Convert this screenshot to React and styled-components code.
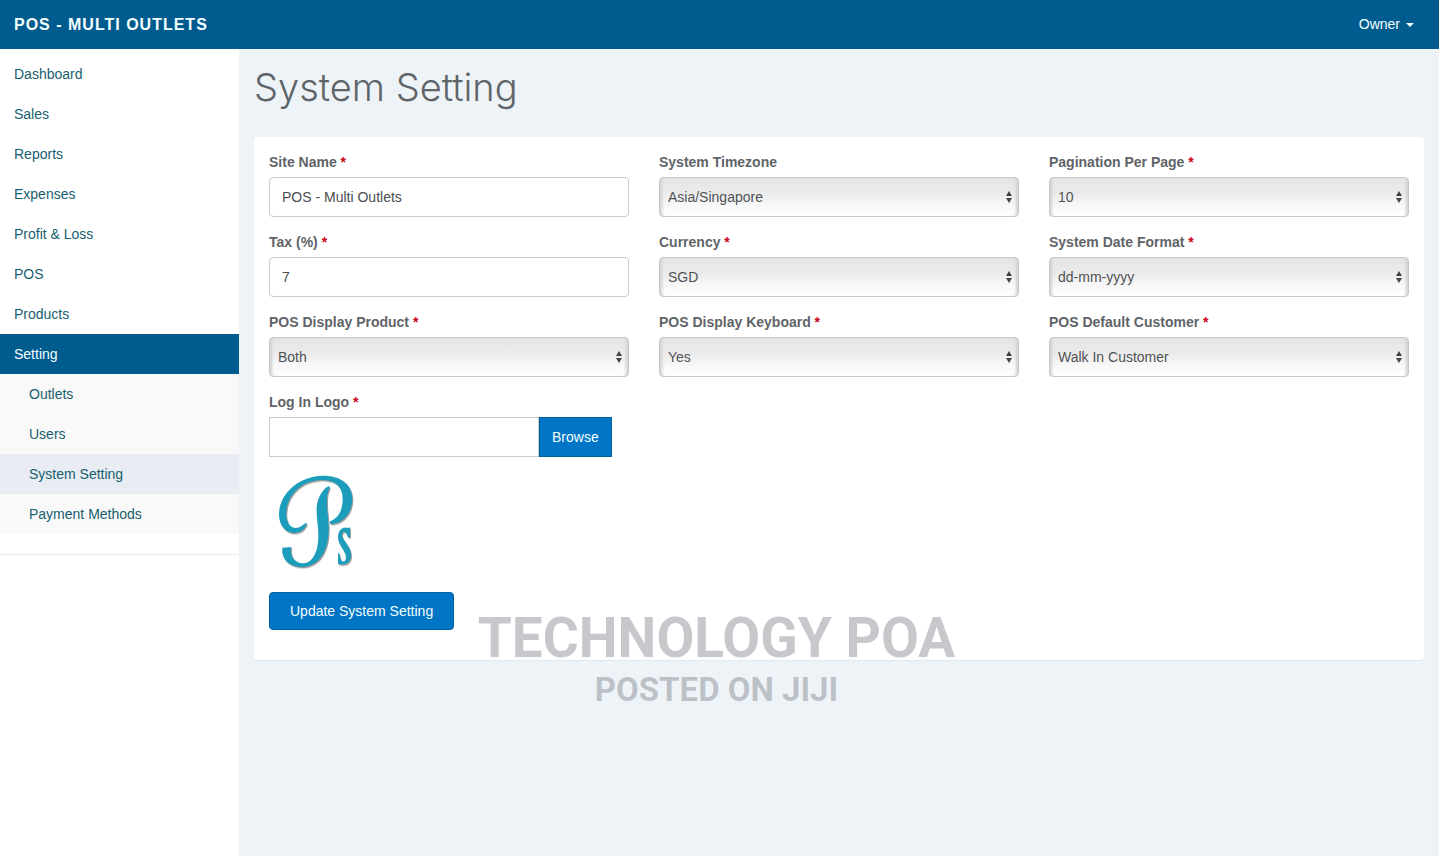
import React from 'react'
import styled, { createGlobalStyle } from 'styled-components'

const GlobalStyle = createGlobalStyle`
  * {
    box-sizing: border-box;
  }

  body {
    background-color: #EEF3F7;
    color: #5F6468;
    font-family: 'Liberation Sans', Arial, sans-serif;
    font-size: 14px;
    line-height: 20px;
    margin: 0;
  }

  input,
  select,
  button {
    font: inherit;
  }
`

const Page = styled.div`
  display: flex;
  flex-direction: column;
  min-height: 100vh;
`

const Navbar = styled.header`
  align-items: center;
  background-color: #005B8E;
  display: flex;
  height: 49px;
  justify-content: space-between;
  padding: 0 25px 0 14px;
`

const Brand = styled.a`
  color: #F4FFFF;
  font-size: 16px;
  font-weight: bold;
  letter-spacing: 1px;
  text-decoration: none;
  text-transform: uppercase;
`

const UserMenu = styled.button`
  align-items: center;
  background: none;
  border: none;
  color: #F4FFFF;
  display: flex;
  gap: 6px;
  padding: 0 0 2px;
`

const Caret = styled.span`
  border-left: 4px solid transparent;
  border-right: 4px solid transparent;
  border-top: 4px solid currentColor;
  margin-top: 2px;
`

const Body = styled.div`
  display: flex;
  flex: 1;
`

const Sidebar = styled.nav`
  background-color: #FFFFFF;
  flex: 0 0 239px;
  padding-top: 5px;
`

const Menu = styled.ul`
  border-bottom: 1px solid #E9ECF2;
  list-style: none;
  margin: 0;
  padding: 0 0 20px;
`

const SubMenu = styled.ul`
  background-color: #F9F9F9;
  list-style: none;
  margin: 0;
  padding: 0;
`

const MenuLink = styled.a`
  background-color: ${props => (props.$active ? '#005B8E' : 'transparent')};
  color: ${props => (props.$active ? '#F4FFFF' : '#17606F')};
  display: block;
  padding: 10px 14px;
  text-decoration: none;
`

const SubMenuLink = styled(MenuLink)`
  background-color: ${props => (props.$current ? '#E9ECF2' : 'transparent')};
  padding-left: 29px;
`

const Content = styled.main`
  flex: 1;
  min-width: 0;
  padding: 14px 15px 30px;
`

const Title = styled.h1`
  font-family: Inter, 'Liberation Sans', sans-serif;
  font-size: 38px;
  font-weight: 300;
  line-height: 48px;
  margin: 0 0 26px;
`

const Panel = styled.form`
  background-color: #FFFFFF;
  border-radius: 4px;
  box-shadow: 0 1px 1px rgba(0, 0, 0, 0.05);
  padding: 15px 15px 30px;
`

const Fields = styled.div`
  display: grid;
  gap: 15px 30px;
  grid-template-columns: repeat(3, minmax(0, 1fr));
`

const Label = styled.label`
  display: block;
  font-weight: bold;
  margin-bottom: 5px;
`

const Required = styled.span`
  color: #CC0018;
`

const TextInput = styled.input`
  background-color: #FFFFFF;
  border: 1px solid #CCCCCC;
  border-radius: 4px;
  color: #4A4D50;
  display: block;
  height: 40px;
  padding: 0 12px;
  width: 100%;
`

const SelectBox = styled.div`
  display: grid;

  > * {
    grid-area: 1 / 1;
  }
`

const Select = styled.select`
  appearance: none;
  background: linear-gradient(#E5E5E5, #EBEBEB 40%, #F7F7F7 70%, #FFFFFF);
  border: 1px solid #C8C8C8;
  border-radius: 4px;
  box-shadow: inset 4px 0 3px -2px #D0D0D0, inset -4px 0 3px -2px #D0D0D0;
  color: #4F5255;
  height: 40px;
  padding: 0 24px 0 8px;
  width: 100%;
`

const Arrows = styled.svg`
  align-self: center;
  height: 12px;
  justify-self: end;
  margin-right: 7px;
  pointer-events: none;
  width: 6px;
`

const LogoField = styled.div`
  margin-top: 15px;
`

const FilePicker = styled.div`
  display: flex;
`

const FileName = styled(TextInput)`
  border-radius: 0;
  width: 270px;
`

const Button = styled.button`
  background-color: #0074C5;
  border: 1px solid #00629F;
  border-radius: ${props => (props.$square ? '0' : '4px')};
  color: #F4FFFF;
  cursor: pointer;
  padding: ${props => (props.$square ? '0 12px' : '8px 20px')};
`

const Logo = styled.svg`
  display: block;
  height: 115px;
  margin: 8px 0 12px -9px;
  width: 110px;
`

const Watermark = styled.div`
  align-items: center;
  bottom: 146px;
  color: rgba(105, 111, 120, 0.38);
  display: flex;
  flex-direction: column;
  font-family: Roboto, sans-serif;
  font-weight: 700;
  left: 0;
  pointer-events: none;
  position: absolute;
  right: 6px;
`

const WatermarkName = styled.span`
  font-size: 55px;
  line-height: 64px;
`

const WatermarkNote = styled.span`
  font-size: 33px;
  line-height: 40px;
`

const menu = ['Dashboard', 'Sales', 'Reports', 'Expenses', 'Profit & Loss', 'POS', 'Products']

const subMenu = ['Outlets', 'Users', 'System Setting', 'Payment Methods']

const fields = [
  { id: 'site-name', label: 'Site Name', value: 'POS - Multi Outlets', required: true },
  { id: 'timezone', label: 'System Timezone', options: ['Asia/Singapore', 'Asia/Tokyo'] },
  { id: 'pagination', label: 'Pagination Per Page', options: ['10', '25', '50'], required: true },
  { id: 'tax', label: 'Tax (%)', value: '7', required: true },
  { id: 'currency', label: 'Currency', options: ['SGD', 'USD'], required: true },
  { id: 'date-format', label: 'System Date Format', options: ['dd-mm-yyyy', 'yyyy-mm-dd'], required: true },
  { id: 'display-product', label: 'POS Display Product', options: ['Both', 'Name', 'Photo'], required: true },
  { id: 'display-keyboard', label: 'POS Display Keyboard', options: ['Yes', 'No'], required: true },
  { id: 'default-customer', label: 'POS Default Customer', options: ['Walk In Customer'], required: true },
]

const FieldLabel = ({ id, required, children }) => (
  <Label htmlFor={id}>
    {children} {required && <Required>*</Required>}
  </Label>
)

const Field = ({ id, label, value, options, required }) => (
  <div>
    <FieldLabel id={id} required={required}>
      {label}
    </FieldLabel>
    {options ? (
      <SelectBox>
        <Select id={id} defaultValue={options[0]}>
          {options.map(option => (
            <option key={option}>{option}</option>
          ))}
        </Select>
        <Arrows viewBox="0 0 6 12" aria-hidden="true">
          <path d="M3 0 6 5H0ZM0 7h6L3 12Z" fill="#444444" />
        </Arrows>
      </SelectBox>
    ) : (
      <TextInput id={id} type="text" defaultValue={value} />
    )}
  </div>
)

const BrandMark = () => (
  <Logo viewBox="0 0 330 345" role="img" aria-label="Ps">
    <defs>
      <filter id="mark-shadow" x="-10%" y="-10%" width="125%" height="125%">
        <feDropShadow dx="3" dy="4" stdDeviation="2" floodColor="#555555" floodOpacity="0.6" />
      </filter>
    </defs>
    <g fill="#1B9DBB" filter="url(#mark-shadow)">
      <path d="M141 174C135 194 119 205 101 204C72 202 56 176 57 145C60 82 119 33 190 32C246 32 278 61 277 103C276 146 247 178 211 177C208 173 209 169 214 167C237 158 248 133 248 101C248 64 225 46 187 45C126 45 83 87 79 140C77 170 89 189 108 189C122 189 129 177 139 174Z" />
      <path d="M207 63C210 66 209 69 207 73C194 104 205 145 206 184C208 251 182 302 130 306C91 308 63 286 67 248L94 246C88 271 104 295 128 295C159 295 175 258 175 212C175 173 164 137 174 106C181 84 195 67 207 63Z" />
      <path d="M270 187L270 215C267 218 264 218 262 214C260 198 246 196 246 209C246 226 272 240 273 269C274 294 254 302 234 297L234 264C238 264 239 268 240 276C242 293 257 294 258 279C259 258 234 242 234 217C234 192 252 183 265 189Z" />
    </g>
  </Logo>
)

const App = () => (
  <Page>
    <GlobalStyle />
    <Navbar>
      <Brand href="#">POS - Multi Outlets</Brand>
      <UserMenu type="button">
        Owner
        <Caret />
      </UserMenu>
    </Navbar>
    <Body>
      <Sidebar>
        <Menu>
          {menu.map(item => (
            <li key={item}>
              <MenuLink href="#">{item}</MenuLink>
            </li>
          ))}
          <li>
            <MenuLink href="#" $active>
              Setting
            </MenuLink>
            <SubMenu>
              {subMenu.map(item => (
                <li key={item}>
                  <SubMenuLink href="#" $current={item === 'System Setting'}>
                    {item}
                  </SubMenuLink>
                </li>
              ))}
            </SubMenu>
          </li>
        </Menu>
      </Sidebar>
      <Content>
        <Title>System Setting</Title>
        <Panel onSubmit={e => e.preventDefault()}>
          <Fields>
            {fields.map(field => (
              <Field key={field.id} {...field} />
            ))}
          </Fields>
          <LogoField>
            <FieldLabel id="login-logo" required>
              Log In Logo
            </FieldLabel>
            <FilePicker>
              <FileName id="login-logo" type="text" readOnly />
              <Button type="button" $square>
                Browse
              </Button>
            </FilePicker>
          </LogoField>
          <BrandMark />
          <Button type="submit">Update System Setting</Button>
        </Panel>
      </Content>
    </Body>
    <Watermark>
      <WatermarkName>TECHNOLOGY POA</WatermarkName>
      <WatermarkNote>POSTED ON JIJI</WatermarkNote>
    </Watermark>
  </Page>
)

export default App
